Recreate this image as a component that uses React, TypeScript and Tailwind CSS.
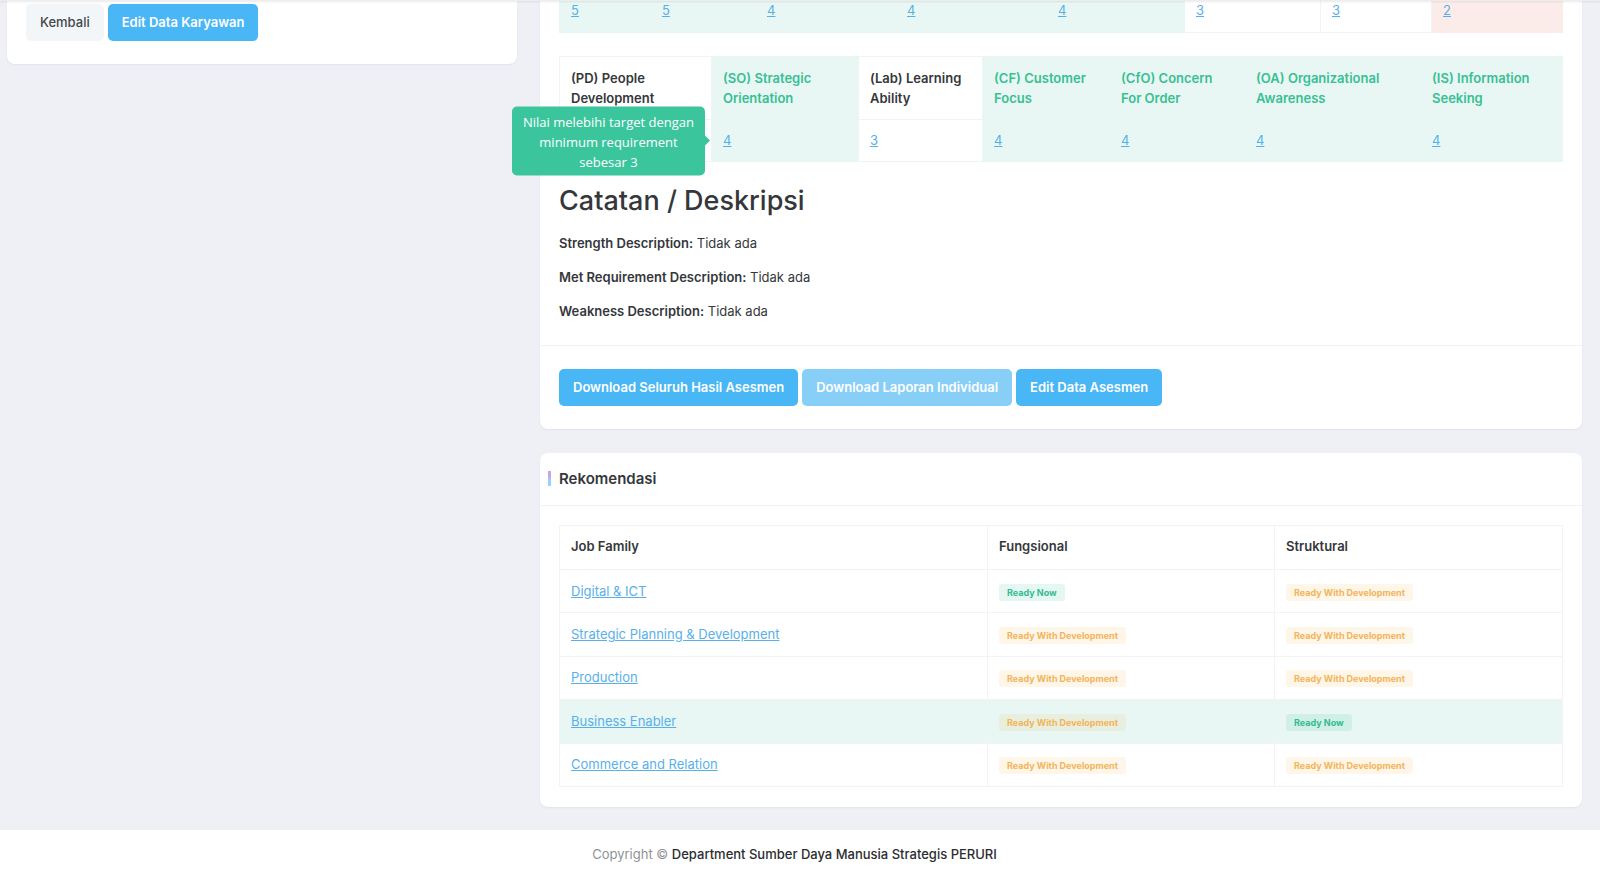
import type { ReactNode } from "react";

type Tone = "above" | "met" | "below";

const cellTone: Record<Tone, string> = {
  above: "bg-[#e8f7f3] border-[#e8f7f3] text-[#38bf94]",
  met: "bg-white border-[#f2f3f4] text-[#35373b]",
  below: "bg-[#fbecea] border-[#fbecea] text-[#35373b]",
};

const firstScores: { score: number; tone: Tone; width: string }[] = [
  { score: 5, tone: "above", width: "w-[91px]" },
  { score: 5, tone: "above", width: "w-[105px]" },
  { score: 4, tone: "above", width: "w-[140px]" },
  { score: 4, tone: "above", width: "w-[151px]" },
  { score: 4, tone: "above", width: "w-[138px]" },
  { score: 3, tone: "met", width: "w-[136px]" },
  { score: 3, tone: "met", width: "w-[111px]" },
  { score: 2, tone: "below", width: "w-[131px]" },
];

const competencies: {
  name: string;
  score?: number;
  tone: Tone;
  width: string;
  tip?: string;
}[] = [
  { name: "(PD) People Development", tone: "met", width: "w-[152px]" },
  {
    name: "(SO) Strategic Orientation",
    score: 4,
    tone: "above",
    width: "w-[147px]",
    tip: "Nilai melebihi target dengan minimum requirement sebesar 3",
  },
  { name: "(Lab) Learning Ability", score: 3, tone: "met", width: "w-[124px]" },
  { name: "(CF) Customer Focus", score: 4, tone: "above", width: "w-[127px]" },
  { name: "(CfO) Concern For Order", score: 4, tone: "above", width: "w-[135px]" },
  { name: "(OA) Organizational Awareness", score: 4, tone: "above", width: "w-[176px]" },
  { name: "(IS) Information Seeking", score: 4, tone: "above", width: "w-[142px]" },
];

const notes = [
  ["Strength Description:", "Tidak ada"],
  ["Met Requirement Description:", "Tidak ada"],
  ["Weakness Description:", "Tidak ada"],
];

const families = [
  { name: "Digital & ICT", functional: true, structural: false, best: false },
  { name: "Strategic Planning & Development", functional: false, structural: false, best: false },
  { name: "Production", functional: false, structural: false, best: false },
  { name: "Business Enabler", functional: false, structural: true, best: true },
  { name: "Commerce and Relation", functional: false, structural: false, best: false },
];

function TextLink({ children }: { children: ReactNode }) {
  return (
    <a href="#" className="text-[#58b0ea] underline">
      {children}
    </a>
  );
}

function Button({ children, light, disabled }: { children: ReactNode; light?: boolean; disabled?: boolean }) {
  const tone = light ? "bg-[#f3f6f8] font-medium text-[#45484d]" : "bg-[#49b6f5] font-semibold text-white";
  return (
    <button
      type="button"
      disabled={disabled}
      className={`h-[37px] rounded-[5px] px-3.5 disabled:opacity-65 ${tone}`}
    >
      {children}
    </button>
  );
}

function Badge({ ready }: { ready: boolean }) {
  const tone = ready ? "bg-[#26bf94]/12 text-[#35bb90]" : "bg-[#f5b849]/12 text-[#f3b45a]";
  return (
    <span className={`inline-block rounded-[3px] px-2 align-middle text-[9px] leading-[17px] font-bold ${tone}`}>
      {ready ? "Ready Now" : "Ready With Development"}
    </span>
  );
}

function Tooltip({ children }: { children: ReactNode }) {
  return (
    <div
      role="tooltip"
      className="absolute top-1/2 right-full z-10 mr-0.5 flex -translate-y-1/2 items-center font-['Open_Sans','Noto_Sans',sans-serif]"
    >
      <div className="w-[193px] rounded-[5px] bg-[#3bc59d] px-2 pt-[5px] pb-1 text-center text-[13px] leading-5 font-medium text-white">
        {children}
      </div>
      <div className="h-0 w-0 border-y-[5px] border-l-[5px] border-y-transparent border-l-[#3bc59d]" />
    </div>
  );
}

export default function App() {
  return (
    <div className="flex min-h-screen flex-col bg-[#eff0f6] font-['Inter',sans-serif] text-[13px] leading-[19px] text-[#35373b]">
      <header className="sticky top-0 z-20 h-px bg-[#eeeeef] shadow-[0_1px_2px_rgba(0,0,0,0.12)]" />
      <main className="grid flex-1 grid-cols-[510fr_1042fr] items-start gap-[23px] pr-[18px] pb-[23px] pl-[7px]">
        <section className="flex gap-1 rounded-b-lg bg-white px-[19px] pt-[3px] pb-[23px] shadow-[0_1px_2px_rgba(20,20,60,0.06)]">
          <Button light>Kembali</Button>
          <Button>Edit Data Karyawan</Button>
        </section>

        <div className="flex flex-col gap-6">
          <section className="rounded-b-lg bg-white shadow-[0_1px_2px_rgba(20,20,60,0.06)]">
            <div className="px-[19px] pb-6">
              <table className="w-full table-fixed border-collapse text-left">
                <tbody>
                  <tr>
                    {firstScores.map((item, i) => (
                      <td key={i} className={`border border-t-0 px-[11px] pb-3 ${item.width} ${cellTone[item.tone]}`}>
                        <TextLink>{item.score}</TextLink>
                      </td>
                    ))}
                  </tr>
                </tbody>
              </table>

              <table className="mt-[23px] w-full table-fixed border-collapse text-left">
                <thead>
                  <tr>
                    {competencies.map((item) => (
                      <th
                        key={item.name}
                        scope="col"
                        className={`border px-[11px] py-[11px] align-top leading-5 font-semibold ${item.width} ${cellTone[item.tone]}`}
                      >
                        {item.name}
                      </th>
                    ))}
                  </tr>
                </thead>
                <tbody>
                  <tr>
                    {competencies.map((item) => (
                      <td key={item.name} className={`relative border px-[11px] py-[11px] ${cellTone[item.tone]}`}>
                        {item.score && <TextLink>{item.score}</TextLink>}
                        {item.tip && <Tooltip>{item.tip}</Tooltip>}
                      </td>
                    ))}
                  </tr>
                </tbody>
              </table>

              <h2 className="mt-[22px] mb-4 text-[27px] leading-[34px] font-medium">Catatan / Deskripsi</h2>
              <div className="flex flex-col gap-[15px]">
                {notes.map(([label, value]) => (
                  <p key={label}>
                    <strong className="font-semibold">{label}</strong> {value}
                  </p>
                ))}
              </div>
            </div>
            <div className="flex gap-1 border-t border-[#f2f3f4] px-[19px] py-[23px]">
              <Button>Download Seluruh Hasil Asesmen</Button>
              <Button disabled>Download Laporan Individual</Button>
              <Button>Edit Data Asesmen</Button>
            </div>
          </section>

          <section className="rounded-lg bg-white shadow-[0_1px_2px_rgba(20,20,60,0.06)]">
            <div className="flex h-[53px] items-center gap-2 border-b border-[#f2f3f4] pb-0.5 pl-2">
              <span className="h-[15px] w-[3px] bg-linear-to-b from-[#c9a3e4] from-40% to-[#95d4f4] to-60%" />
              <h3 className="text-[15px] font-semibold">Rekomendasi</h3>
            </div>
            <div className="px-[19px] pt-[19px] pb-5">
              <table className="h-[262px] w-full table-fixed border-collapse text-left">
                <thead>
                  <tr className="h-11">
                    <th scope="col" className="w-[428px] border border-[#f2f3f4] px-[11px] pb-0.5 font-semibold">Job Family</th>
                    <th scope="col" className="w-[287px] border border-[#f2f3f4] px-[11px] pb-0.5 font-semibold">Fungsional</th>
                    <th scope="col" className="w-[288px] border border-[#f2f3f4] px-[11px] pb-0.5 font-semibold">Struktural</th>
                  </tr>
                </thead>
                <tbody>
                  {families.map((family) => (
                    <tr key={family.name} className={family.best ? "h-[43px] bg-[#e8f7f3]" : "h-[43px] bg-white"}>
                      <td className="border border-[#f2f3f4] px-[11px]">
                        <TextLink>{family.name}</TextLink>
                      </td>
                      <td className="border border-[#f2f3f4] px-[11px]">
                        <Badge ready={family.functional} />
                      </td>
                      <td className="border border-[#f2f3f4] px-[11px]">
                        <Badge ready={family.structural} />
                      </td>
                    </tr>
                  ))}
                </tbody>
              </table>
            </div>
          </section>
        </div>
      </main>
      <footer className="bg-white pt-[15px] pr-[11px] pb-3 text-center text-[#8f9297]">
        Copyright © <span className="font-medium text-[#2b2d31]">Department Sumber Daya Manusia Strategis PERURI</span>
      </footer>
    </div>
  );
}
